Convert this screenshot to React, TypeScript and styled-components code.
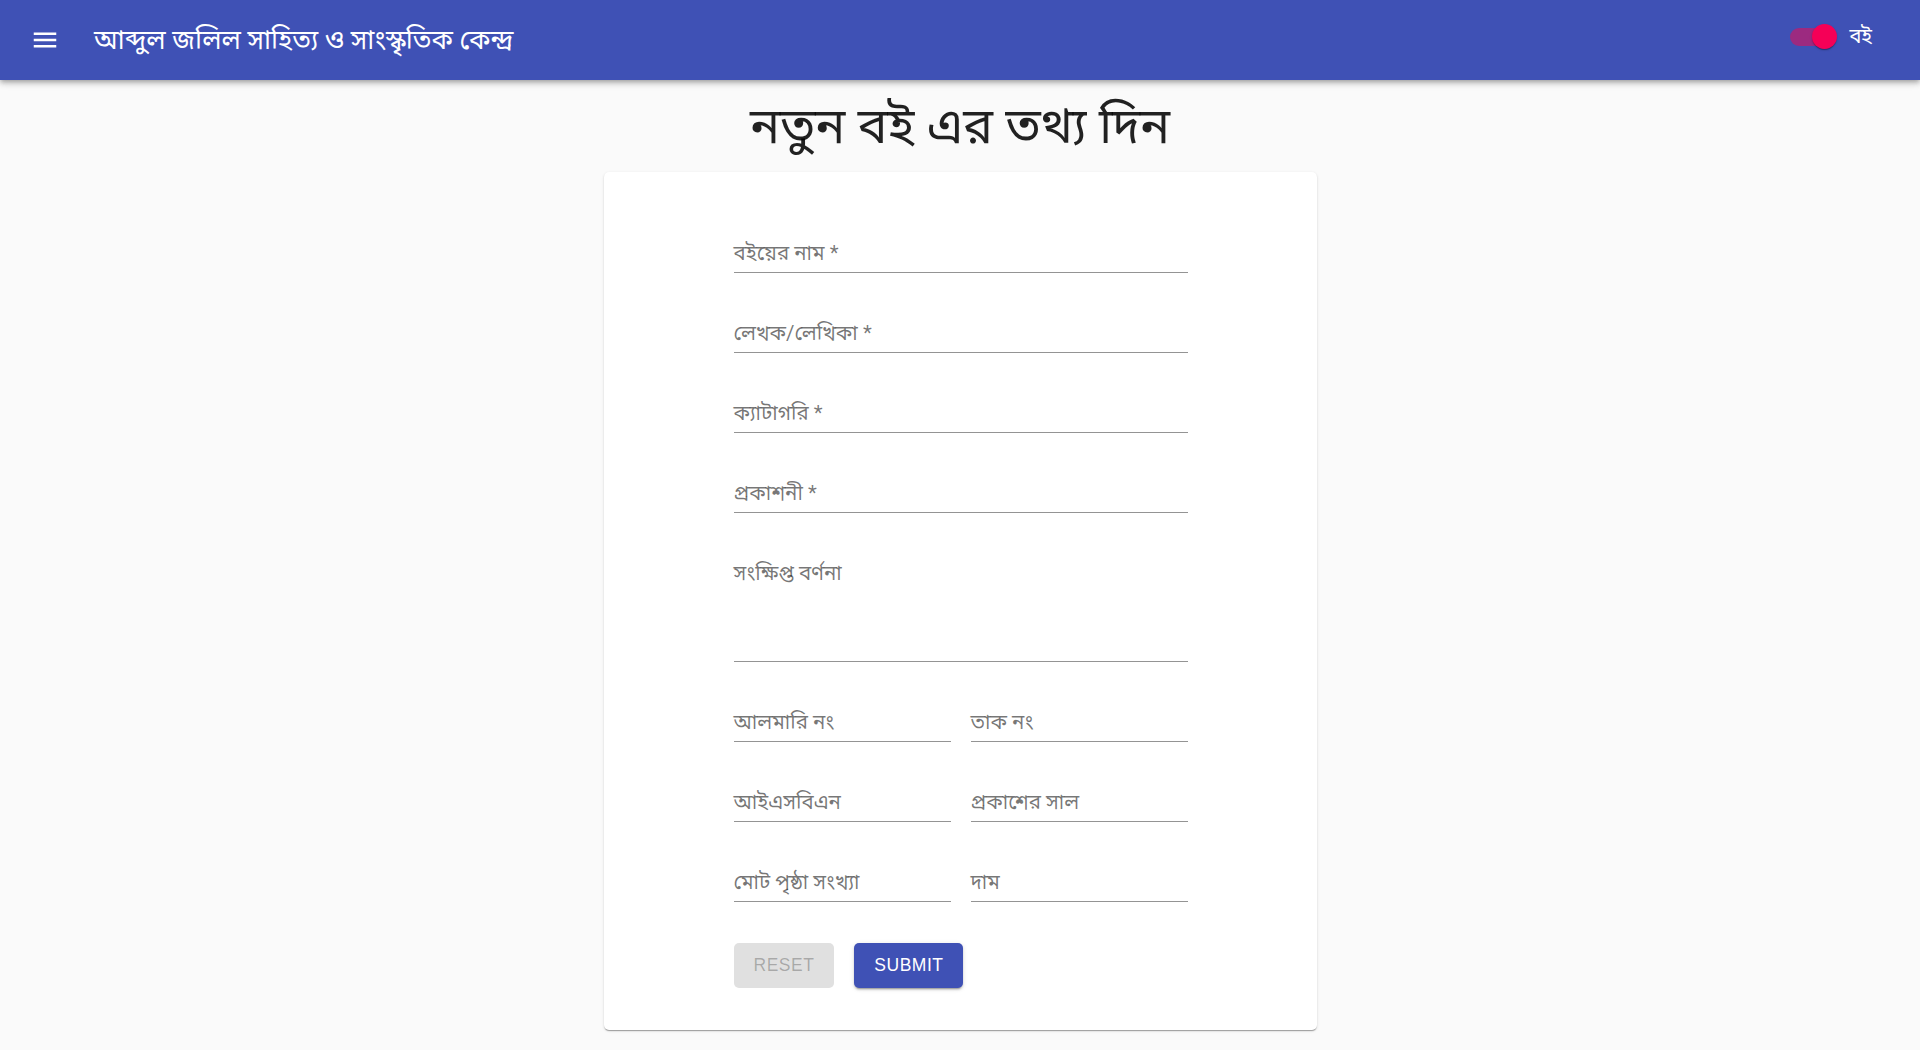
import React from "react";
import styled, { createGlobalStyle } from "styled-components";

const GlobalStyle = createGlobalStyle`
  html, body { margin: 0; padding: 0; }
  body {
    background: #fafafa;
    font-family: Roboto, "Noto Sans Bengali", "Noto Sans", "Liberation Sans", sans-serif;
    color: rgba(0,0,0,0.87);
  }
  * { box-sizing: border-box; }
`;

const Page = styled.div`
  min-height: 100vh;
  display: flex;
  flex-direction: column;
`;

const AppBar = styled.header`
  height: 80px;
  background: #3f51b5;
  color: #fff;
  display: flex;
  align-items: center;
  padding: 0 48px 0 30px;
  box-shadow: 0 2px 4px -1px rgba(0,0,0,0.2), 0 4px 5px 0 rgba(0,0,0,0.14), 0 1px 10px 0 rgba(0,0,0,0.12);
  position: relative;
  z-index: 2;
`;

const MenuButton = styled.button`
  width: 30px;
  height: 30px;
  padding: 0;
  border: 0;
  background: transparent;
  color: #fff;
  display: flex;
  align-items: center;
  justify-content: center;
  margin-right: 34px;
  cursor: pointer;
`;

const Title = styled.h1`
  margin: 0;
  font-size: 26.5px;
  font-weight: 400;
  line-height: 1.6;
  flex: 1;
`;

const SwitchWrap = styled.label`
  display: flex;
  align-items: center;
  gap: 16px;
  font-size: 20px;
  cursor: pointer;
  margin-top: -6px;
`;

const Track = styled.span`
  position: relative;
  width: 43px;
  height: 18px;
  border-radius: 9px;
  background: #9c2a80;
  display: inline-block;
`;

const Thumb = styled.span`
  position: absolute;
  top: -4px;
  right: -4px;
  width: 25px;
  height: 25px;
  border-radius: 50%;
  background: #f50057;
  box-shadow: 0 2px 1px -1px rgba(0,0,0,0.2), 0 1px 1px 0 rgba(0,0,0,0.14), 0 1px 3px 0 rgba(0,0,0,0.12);
`;

const Main = styled.main`
  display: flex;
  flex-direction: column;
  align-items: center;
`;

const Heading = styled.h2`
  margin: 11px 0 11px;
  font-size: 50px;
  font-weight: 400;
  line-height: 70px;
  text-align: center;
`;

const Card = styled.form`
  width: 713px;
  background: #fff;
  border-radius: 5px;
  box-shadow: 0 2px 1px -1px rgba(0,0,0,0.2), 0 1px 1px 0 rgba(0,0,0,0.14), 0 1px 3px 0 rgba(0,0,0,0.12);
  padding: 21px 129px 42px 130px;
  display: flex;
  flex-direction: column;
`;

const Row = styled.div`
  display: grid;
  grid-template-columns: 1fr 1fr;
  column-gap: 20px;
`;

const Field = styled.div<{ $multiline?: boolean }>`
  position: relative;
  margin-top: 20px;
  height: ${(p) => (p.$multiline ? "129px" : "60px")};
  border-bottom: 1px solid #949494;
  display: flex;
  align-items: flex-end;
`;

const Label = styled.label`
  position: absolute;
  left: 0;
  top: 28px;
  font-size: 20.5px;
  line-height: 24px;
  color: rgba(0,0,0,0.54);
  pointer-events: none;
  white-space: nowrap;
`;

const Input = styled.input`
  width: 100%;
  border: 0;
  outline: none;
  background: transparent;
  font: inherit;
  font-size: 20px;
  height: 32px;
  padding: 0;
`;

const TextArea = styled.textarea`
  width: 100%;
  height: 100px;
  border: 0;
  outline: none;
  background: transparent;
  font: inherit;
  font-size: 20px;
  resize: none;
  padding: 0;
`;

const Actions = styled.div`
  display: flex;
  gap: 20px;
  margin-top: 41px;
`;

const Button = styled.button<{ $primary?: boolean }>`
  height: 45px;
  padding: 0 20px;
  border: 0;
  border-radius: 5px;
  font-family: "Liberation Sans", Arial, sans-serif;
  font-size: 17.5px;
  font-weight: 500;
  letter-spacing: 0.5px;
  text-transform: uppercase;
  background: ${(p) => (p.$primary ? "#3f51b5" : "#e0e0e0")};
  color: ${(p) => (p.$primary ? "#fff" : "rgba(0,0,0,0.26)")};
  box-shadow: ${(p) =>
    p.$primary
      ? "0 3px 1px -2px rgba(0,0,0,0.2), 0 2px 2px 0 rgba(0,0,0,0.14), 0 1px 5px 0 rgba(0,0,0,0.12)"
      : "none"};
  cursor: ${(p) => (p.$primary ? "pointer" : "default")};
`;

type FieldDef = { id: string; label: string; multiline?: boolean };

const TextField: React.FC<FieldDef> = ({ id, label, multiline }) => (
  <Field $multiline={multiline}>
    <Label htmlFor={id}>{label}</Label>
    {multiline ? <TextArea id={id} /> : <Input id={id} />}
  </Field>
);

const MenuIcon = () => (
  <svg width="30" height="30" viewBox="0 0 24 24" fill="currentColor">
    <path d="M3 18h18v-2H3v2zm0-5h18v-2H3v2zm0-7v2h18V6H3z" />
  </svg>
);

export default function App() {
  return (
    <Page>
      <GlobalStyle />
      <AppBar>
        <MenuButton aria-label="menu">
          <MenuIcon />
        </MenuButton>
        <Title>আব্দুল জলিল সাহিত্য ও সাংস্কৃতিক কেন্দ্র</Title>
        <SwitchWrap>
          <Track>
            <Thumb />
          </Track>
          বই
        </SwitchWrap>
      </AppBar>
      <Main>
        <Heading>নতুন বই এর তথ্য দিন</Heading>
        <Card onSubmit={(e) => e.preventDefault()}>
          <TextField id="name" label="বইয়ের নাম *" />
          <TextField id="author" label="লেখক/লেখিকা *" />
          <TextField id="category" label="ক্যাটাগরি *" />
          <TextField id="publisher" label="প্রকাশনী *" />
          <TextField id="desc" label="সংক্ষিপ্ত বর্ণনা" multiline />
          <Row>
            <TextField id="shelf" label="আলমারি নং" />
            <TextField id="rack" label="তাক নং" />
          </Row>
          <Row>
            <TextField id="isbn" label="আইএসবিএন" />
            <TextField id="year" label="প্রকাশের সাল" />
          </Row>
          <Row>
            <TextField id="pages" label="মোট পৃষ্ঠা সংখ্যা" />
            <TextField id="price" label="দাম" />
          </Row>
          <Actions>
            <Button type="reset">Reset</Button>
            <Button type="submit" $primary>Submit</Button>
          </Actions>
        </Card>
      </Main>
    </Page>
  );
}
